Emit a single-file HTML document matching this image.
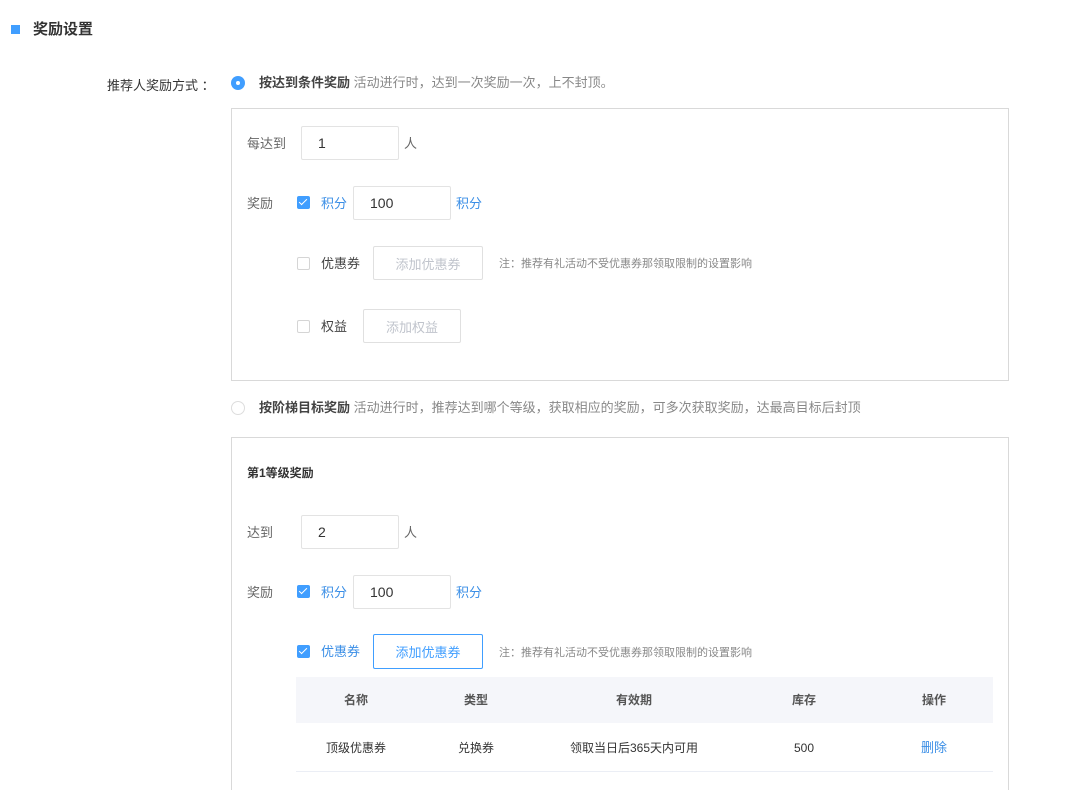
<!DOCTYPE html><html><head><meta charset="utf-8"><style>
html,body{margin:0;width:1080px;height:790px;overflow:hidden}
body{background:#fff;font-family:"Liberation Sans","Noto Sans CJK SC",sans-serif;font-size:13px;color:#333;position:relative}
.a{position:absolute;white-space:nowrap;line-height:16px}
.box{position:absolute;border:1px solid #d9d9d9;box-sizing:border-box}
.inp{position:absolute;border:1px solid #e3e3e3;border-radius:2px;box-sizing:border-box;font-size:14px;color:#333;padding-left:16px;display:flex;align-items:center}
.g{color:#666}.gl{color:#888}.b{color:#3a8ee6}
.cb{position:absolute;width:13px;height:13px;border-radius:2px;box-sizing:border-box}
.cb.on{background:#409eff}
.cb.on:after{content:"";position:absolute;left:4px;top:1px;width:3px;height:7px;border:solid #fff;border-width:0 1.5px 1.5px 0;transform:rotate(45deg)}
.cb.off{border:1px solid #d5d5d5}
.btn{position:absolute;border:1px solid #e0e0e0;border-radius:2px;box-sizing:border-box;color:#c0c4cc;display:flex;align-items:center;justify-content:center;font-size:13px}
.note{font-size:11px;color:#888}
.c{position:absolute;transform:translateX(-50%);white-space:nowrap;font-size:12px;line-height:16px}
</style></head><body>
<div class="a" style="left:11px;top:25px;width:9px;height:9px;background:#409eff"></div>
<div class="a" style="left:33px;top:22px;font-size:15px;font-weight:bold;color:#333">奖励设置</div>
<div class="a" style="left:107px;top:78px;color:#333">推荐人奖励方式 ：</div>
<div class="a" style="left:231px;top:76px;width:14px;height:14px;border-radius:50%;background:#409eff"><div style="position:absolute;left:5px;top:5px;width:4px;height:4px;border-radius:50%;background:#fff"></div></div>
<div class="a" style="left:259px;top:75px"><b style="font-weight:600;color:#444">按达到条件奖励</b> <span class="gl">活动进行时，达到一次奖励一次，上不封顶。</span></div>
<div class="box" style="left:231px;top:108px;width:778px;height:273px"></div>
<div class="a g" style="left:247px;top:136px">每达到</div>
<div class="inp" style="left:301px;top:126px;width:98px;height:34px">1</div>
<div class="a g" style="left:404px;top:136px">人</div>
<div class="a g" style="left:247px;top:196px">奖励</div>
<div class="cb on" style="left:297px;top:196px"></div>
<div class="a b" style="left:321px;top:196px">积分</div>
<div class="inp" style="left:353px;top:186px;width:98px;height:34px">100</div>
<div class="a b" style="left:456px;top:196px">积分</div>
<div class="cb off" style="left:297px;top:257px"></div>
<div class="a" style="left:321px;top:256px;color:#444">优惠券</div>
<div class="btn" style="left:373px;top:246px;width:110px;height:34px">添加优惠券</div>
<div class="a note" style="left:499px;top:256px">注：推荐有礼活动不受优惠券那领取限制的设置影响</div>
<div class="cb off" style="left:297px;top:320px"></div>
<div class="a" style="left:321px;top:319px;color:#444">权益</div>
<div class="btn" style="left:363px;top:309px;width:98px;height:34px">添加权益</div>
<div class="a" style="left:231px;top:401px;width:14px;height:14px;border-radius:50%;border:1px solid #ddd;box-sizing:border-box"></div>
<div class="a" style="left:259px;top:400px"><b style="font-weight:600;color:#444">按阶梯目标奖励</b> <span class="gl">活动进行时，推荐达到哪个等级，获取相应的奖励，可多次获取奖励，达最高目标后封顶</span></div>
<div class="box" style="left:231px;top:437px;width:778px;height:353px;border-bottom:none"></div>
<div class="a" style="left:247px;top:465px;font-weight:bold;font-size:12px;color:#333">第1等级奖励</div>
<div class="a g" style="left:247px;top:525px">达到</div>
<div class="inp" style="left:301px;top:515px;width:98px;height:34px">2</div>
<div class="a g" style="left:404px;top:525px">人</div>
<div class="a g" style="left:247px;top:585px">奖励</div>
<div class="cb on" style="left:297px;top:585px"></div>
<div class="a b" style="left:321px;top:585px">积分</div>
<div class="inp" style="left:353px;top:575px;width:98px;height:34px">100</div>
<div class="a b" style="left:456px;top:585px">积分</div>
<div class="cb on" style="left:297px;top:645px"></div>
<div class="a b" style="left:321px;top:644px">优惠券</div>
<div class="btn" style="left:373px;top:634px;width:110px;height:35px;border-color:#409eff;color:#409eff">添加优惠券</div>
<div class="a note" style="left:499px;top:645px">注：推荐有礼活动不受优惠券那领取限制的设置影响</div>
<div class="a" style="left:296px;top:677px;width:697px;height:46px;background:#f5f6fa"></div>
<div class="a" style="left:296px;top:771px;width:697px;height:1px;background:#ebeef5"></div>
<div class="c" style="left:356px;top:692px;font-weight:600;color:#555">名称</div>
<div class="c" style="left:476px;top:692px;font-weight:600;color:#555">类型</div>
<div class="c" style="left:634px;top:692px;font-weight:600;color:#555">有效期</div>
<div class="c" style="left:804px;top:692px;font-weight:600;color:#555">库存</div>
<div class="c" style="left:934px;top:692px;font-weight:600;color:#555">操作</div>
<div class="c" style="left:356px;top:740px">顶级优惠券</div>
<div class="c" style="left:476px;top:740px">兑换券</div>
<div class="c" style="left:634px;top:740px">领取当日后365天内可用</div>
<div class="c" style="left:804px;top:740px">500</div>
<div class="c b" style="left:934px;top:740px;font-size:13px">删除</div>
</body></html>
